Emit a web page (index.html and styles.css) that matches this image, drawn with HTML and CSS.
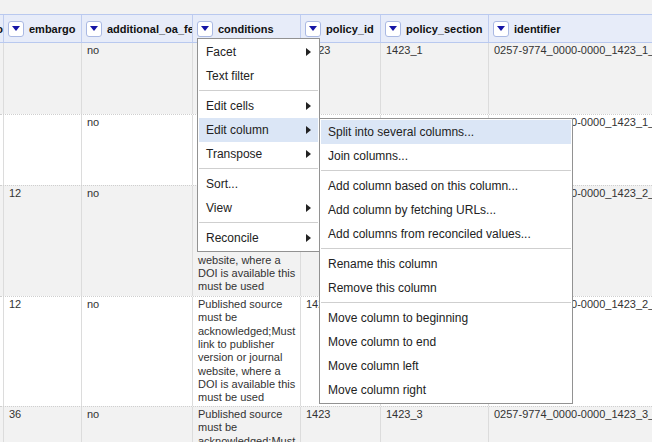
FILE: index.html
```html
<!DOCTYPE html>
<html>
<head>
<meta charset="utf-8">
<title>Data grid</title>
<link rel="stylesheet" href="styles.css">
</head>
<body>
<div class="view">
  <div class="grid">
    <div class="row head">
      <div class="hcell clip"><span class="hlabel">prerequisite_info</span></div>
      <div class="hcell"><span class="drop"></span><span class="hlabel">embargo</span></div>
      <div class="hcell"><span class="drop"></span><span class="hlabel">additional_oa_fee</span></div>
      <div class="hcell"><span class="drop"></span><span class="hlabel">conditions</span></div>
      <div class="hcell"><span class="drop"></span><span class="hlabel">policy_id</span></div>
      <div class="hcell"><span class="drop"></span><span class="hlabel">policy_section</span></div>
      <div class="hcell"><span class="drop"></span><span class="hlabel">identifier</span></div>
    </div>

    <div class="row odd first h-a">
      <div class="cell edge"></div>
      <div class="cell"></div>
      <div class="cell">no</div>
      <div class="cell">Published source must be acknowledged;Must link to publisher version</div>
      <div class="cell">1423</div>
      <div class="cell">1423_1</div>
      <div class="cell id">0257-9774_0000-0000_1423_1_1</div>
    </div>

    <div class="row even h-a">
      <div class="cell edge"></div>
      <div class="cell"></div>
      <div class="cell">no</div>
      <div class="cell">Published source must be acknowledged;Must link to publisher version</div>
      <div class="cell">1423</div>
      <div class="cell">1423_1</div>
      <div class="cell id">0257-9774_0000-0000_1423_1_2</div>
    </div>

    <div class="row odd h-b">
      <div class="cell edge"></div>
      <div class="cell">12</div>
      <div class="cell">no</div>
      <div class="cell">Published source must be acknowledged;Must link to publisher version or journal website, where a DOI is available this must be used</div>
      <div class="cell">1423</div>
      <div class="cell">1423_2</div>
      <div class="cell id">0257-9774_0000-0000_1423_2_1</div>
    </div>

    <div class="row even h-c">
      <div class="cell edge"></div>
      <div class="cell">12</div>
      <div class="cell">no</div>
      <div class="cell">Published source must be acknowledged;Must link to publisher version or journal website, where a DOI is available this must be used</div>
      <div class="cell">1423</div>
      <div class="cell">1423_2</div>
      <div class="cell id">0257-9774_0000-0000_1423_2_2</div>
    </div>

    <div class="row odd">
      <div class="cell edge"></div>
      <div class="cell">36</div>
      <div class="cell">no</div>
      <div class="cell">Published source must be acknowledged;Must link to publisher version or journal website, where a DOI is available this must be used</div>
      <div class="cell">1423</div>
      <div class="cell">1423_3</div>
      <div class="cell id">0257-9774_0000-0000_1423_3_1</div>
    </div>
  </div>
</div>

<div class="menu main">
  <div class="item"><span>Facet</span><span class="arrow"></span></div>
  <div class="item"><span>Text filter</span></div>
  <div class="sep"></div>
  <div class="item"><span>Edit cells</span><span class="arrow"></span></div>
  <div class="item active"><span>Edit column</span><span class="arrow"></span></div>
  <div class="item"><span>Transpose</span><span class="arrow"></span></div>
  <div class="sep"></div>
  <div class="item"><span>Sort...</span></div>
  <div class="item"><span>View</span><span class="arrow"></span></div>
  <div class="sep"></div>
  <div class="item"><span>Reconcile</span><span class="arrow"></span></div>
</div>

<div class="menu sub">
  <div class="item active"><span>Split into several columns...</span></div>
  <div class="item"><span>Join columns...</span></div>
  <div class="sep"></div>
  <div class="item"><span>Add column based on this column...</span></div>
  <div class="item"><span>Add column by fetching URLs...</span></div>
  <div class="item"><span>Add columns from reconciled values...</span></div>
  <div class="sep"></div>
  <div class="item"><span>Rename this column</span></div>
  <div class="item"><span>Remove this column</span></div>
  <div class="sep"></div>
  <div class="item"><span>Move column to beginning</span></div>
  <div class="item"><span>Move column to end</span></div>
  <div class="item"><span>Move column left</span></div>
  <div class="item"><span>Move column right</span></div>
</div>
</body>
</html>
```

FILE: styles.css
```css
* { box-sizing: border-box; }

html, body {
  margin: 0;
  height: 100%;
}

body {
  position: relative;
  background: #f2f2f2;
  font-family: "Liberation Sans", Arial, sans-serif;
  overflow: hidden;
}

.view {
  width: 652px;
  height: 442px;
  padding-top: 14px;
  overflow: hidden;
}

.grid {
  width: 688px;
}

.row {
  display: grid;
  grid-template-columns: 3px 78px 111px 108px 80px 108px 200px;
}

/* header */
.head {
  height: 29px;
  background: #e7ecf9;
  border-top: 1px solid #b9c9ef;
  border-bottom: 1px solid #b9c9ef;
}

.hcell {
  display: flex;
  align-items: center;
  padding-left: 4px;
  border-left: 1px solid #c0cdef;
  overflow: hidden;
  white-space: nowrap;
  font-size: 11px;
  font-weight: bold;
  color: #111;
}

.hcell.clip {
  justify-content: flex-end;
  padding-left: 0;
  border-left: 0;
}

.drop {
  flex: none;
  width: 16px;
  height: 16px;
  margin-right: 5px;
  background: #fff;
  border: 1px solid #aab9e3;
  border-radius: 3px;
  display: flex;
  align-items: center;
  justify-content: center;
}

.drop::after {
  content: "";
  border-left: 4px solid transparent;
  border-right: 4px solid transparent;
  border-top: 5px solid #1414a6;
}

/* body rows */
.odd { background: #f2f2f2; }
.even { background: #ffffff; }

.row.odd, .row.even {
  border-top: 1px dotted #cfcfcf;
}

.row.first { border-top: 0; }

.h-a { height: 71px; }
.h-b { height: 111px; }
.h-c { height: 110px; }

.cell {
  border-left: 1px solid #dcdcdc;
  padding: 1px 3px 1px 5px;
  font-size: 11px;
  line-height: 13.33px;
  color: #333;
  overflow: hidden;
}

.cell.edge { border-left: 0; padding: 0; }

.cell.id { white-space: nowrap; }

/* menus */
.menu {
  position: absolute;
  top: 38px;
  left: 197px;
  width: 123px;
  padding: 1px;
  background: #fff;
  border: 1px solid #929292;
  font-size: 12px;
  color: #222;
}

.menu.sub {
  top: 118px;
  left: 319px;
  width: 254px;
}

.item {
  height: 24px;
  padding: 0 7px;
  display: flex;
  align-items: center;
  justify-content: space-between;
  white-space: nowrap;
}

.item.active { background: #dbe6f6; }

.arrow {
  flex: none;
  border-top: 4px solid transparent;
  border-bottom: 4px solid transparent;
  border-left: 5px solid #222;
}

.sep {
  height: 1px;
  margin: 2px 0 3px;
  background: #cfcfcf;
}
```
